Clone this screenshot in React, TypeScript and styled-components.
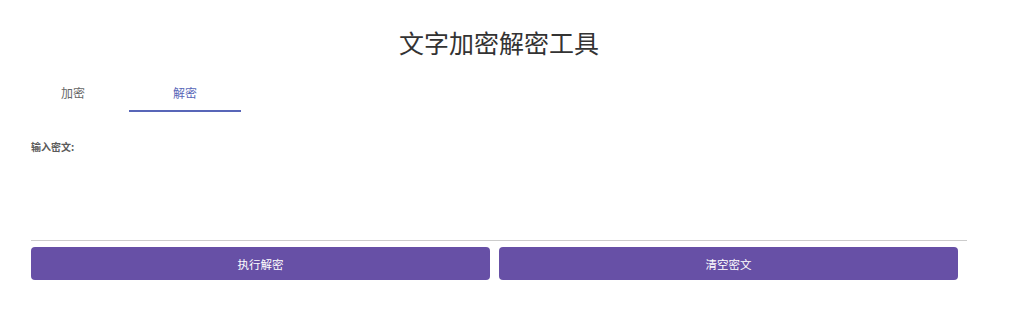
import React, { useState } from 'react';
import styled, { createGlobalStyle } from 'styled-components';

const GlobalStyle = createGlobalStyle`
  html, body {
    margin: 0;
    padding: 0;
    background: #ffffff;
    font-family: "Noto Sans CJK SC", "Noto Sans", sans-serif;
  }
`;

const Page = styled.div`
  width: 936px;
  height: 321px;
  box-sizing: border-box;
  margin-left: 31px;
  padding-top: 24px;
`;

const Title = styled.h1`
  margin: 0;
  text-align: center;
  font-size: 25px;
  line-height: 36px;
  font-weight: 400;
  color: #333333;
`;

const TabBar = styled.div`
  display: flex;
  margin: 13px 0 0 -14px;
`;

const Tab = styled.button<{ $active: boolean }>`
  width: 112px;
  height: 39px;
  padding: 1px 0 0;
  border: none;
  border-bottom: 2px solid ${p => (p.$active ? '#5866b8' : 'transparent')};
  background: none;
  font-family: inherit;
  font-size: 12px;
  color: ${p => (p.$active ? '#5866b8' : '#666666')};
  cursor: pointer;
`;

const Form = styled.div`
  width: 927px;
  margin-top: 28px;
`;

const Label = styled.label`
  display: block;
  font-size: 10px;
  line-height: 14px;
  font-weight: 700;
  color: #5a5a5a;
`;

const TextArea = styled.textarea`
  display: block;
  box-sizing: border-box;
  width: calc(100% + 9px);
  height: 87px;
  margin: 0;
  border: none;
  border-bottom: 1px solid #cccccc;
  outline: none;
  resize: none;
  font-family: inherit;
  font-size: 12px;
`;

const Actions = styled.div`
  display: grid;
  grid-template-columns: 1fr 1fr;
  gap: 9px;
  margin-top: 6px;
`;

const Action = styled.button`
  height: 33px;
  border: none;
  border-radius: 4px;
  background: #6750a6;
  color: #ffffff;
  font-family: inherit;
  font-size: 11.5px;
  cursor: pointer;
`;

export default function App() {
  const [mode, setMode] = useState<'encrypt' | 'decrypt'>('decrypt');
  const [text, setText] = useState('');

  return (
    <>
      <GlobalStyle />
      <Page>
        <Title>文字加密解密工具</Title>
        <TabBar>
          <Tab $active={mode === 'encrypt'} onClick={() => setMode('encrypt')}>
            加密
          </Tab>
          <Tab $active={mode === 'decrypt'} onClick={() => setMode('decrypt')}>
            解密
          </Tab>
        </TabBar>
        <Form>
          <Label htmlFor="cipher">输入密文:</Label>
          <TextArea id="cipher" value={text} onChange={e => setText(e.target.value)} />
          <Actions>
            <Action>执行解密</Action>
            <Action onClick={() => setText('')}>清空密文</Action>
          </Actions>
        </Form>
      </Page>
    </>
  );
}
